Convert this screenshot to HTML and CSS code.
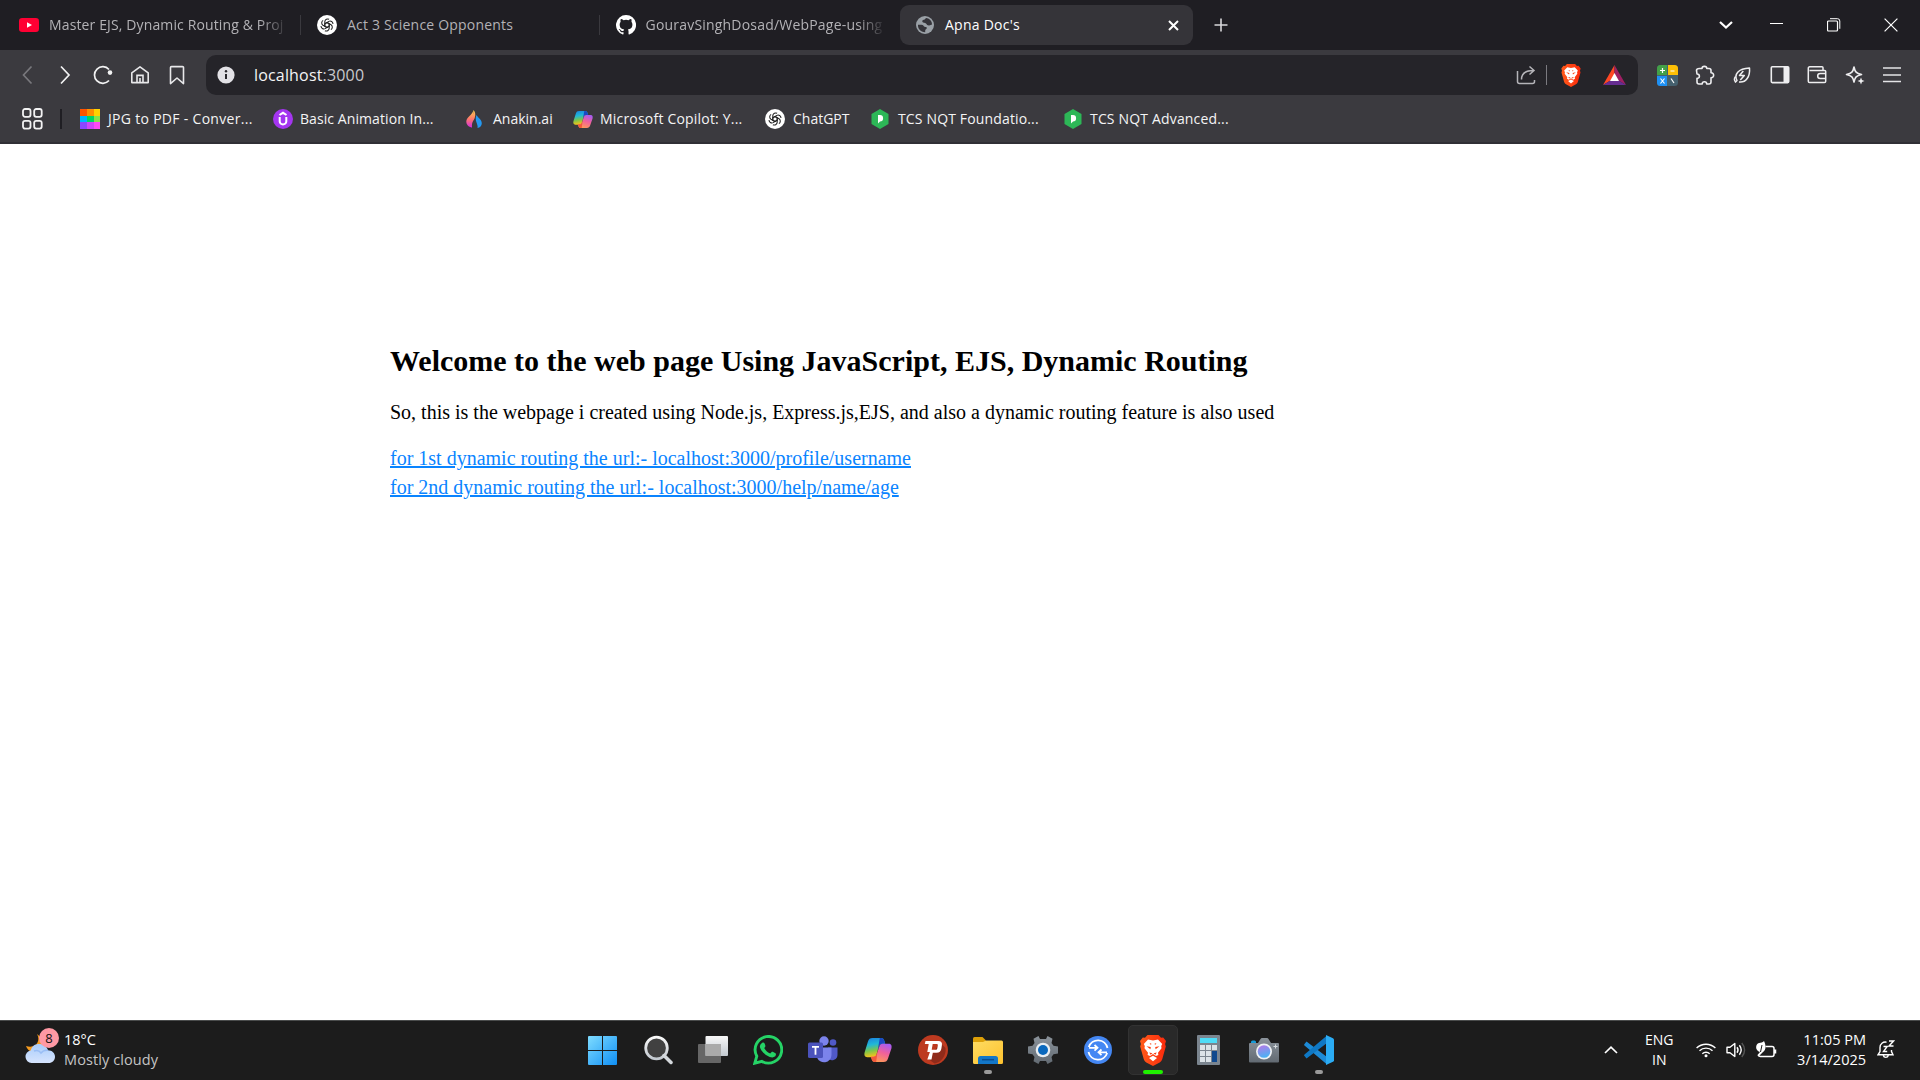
FILE: index.html
```html
<!DOCTYPE html>
<html lang="en">
<head>
<meta charset="utf-8">
<title>Apna Doc's</title>
<link rel="stylesheet" href="styles.css">
</head>
<body>
<svg class="defs" width="0" height="0" aria-hidden="true">
  <defs>
    <linearGradient id="cpA" x1="0" y1="0" x2="0.2" y2="1"><stop offset="0" stop-color="#1b7fe0"/><stop offset=".4" stop-color="#20b8d8"/><stop offset=".7" stop-color="#7cc64a"/><stop offset="1" stop-color="#f3c21a"/></linearGradient>
    <linearGradient id="cpB" x1="0.7" y1="0" x2="0.3" y2="1"><stop offset="0" stop-color="#a85cf0"/><stop offset=".45" stop-color="#f0609c"/><stop offset="1" stop-color="#ff9b55"/></linearGradient>
    <linearGradient id="win" x1="0" y1="0" x2="1" y2="1"><stop offset="0" stop-color="#7fdcff"/><stop offset="1" stop-color="#0f8ff5"/></linearGradient>
    <linearGradient id="glass" x1="0" y1="0" x2="0" y2="1"><stop offset="0" stop-color="#f8f8f8"/><stop offset="1" stop-color="#c3c9d0"/></linearGradient>
    <linearGradient id="flameA" x1="0" y1="0" x2="0" y2="1"><stop offset="0" stop-color="#ffd34d"/><stop offset=".5" stop-color="#ff7a6a"/><stop offset="1" stop-color="#d52be0"/></linearGradient>
    <linearGradient id="cloud" x1="0" y1="0" x2="0" y2="1"><stop offset="0" stop-color="#a9cdfb"/><stop offset="1" stop-color="#d6e4fd"/></linearGradient>
    <linearGradient id="folder" x1="0" y1="0" x2="1" y2="1"><stop offset="0" stop-color="#ffdc62"/><stop offset="1" stop-color="#fdc22e"/></linearGradient>
    <linearGradient id="lion" x1="0" y1="0" x2="1" y2="0"><stop offset="0" stop-color="#ff5a1a"/><stop offset="1" stop-color="#fb2a0c"/></linearGradient>
    <linearGradient id="lens" x1=".3" y1="0" x2=".6" y2="1"><stop offset="0" stop-color="#b27be8"/><stop offset="1" stop-color="#46b4f4"/></linearGradient>
    <linearGradient id="steel" x1="0" y1="0" x2="0" y2="1"><stop offset="0" stop-color="#8b939b"/><stop offset="1" stop-color="#626a72"/></linearGradient>
    <symbol id="openai" viewBox="0 0 20 20">
      <circle cx="10" cy="10" r="10" fill="#fff"/>
      <g fill="none" stroke="#222" stroke-width="1.05" stroke-linejoin="round">
        <path id="petal" d="M10 7.5 L12.2 8.8 V13.4 A2.9 2.9 0 0 1 7.9 15.7"/>
        <use href="#petal" transform="rotate(60 10 10)"/><use href="#petal" transform="rotate(120 10 10)"/>
        <use href="#petal" transform="rotate(180 10 10)"/><use href="#petal" transform="rotate(240 10 10)"/>
        <use href="#petal" transform="rotate(300 10 10)"/>
      </g>
    </symbol>
    <symbol id="copilot" viewBox="0 0 28 26">
      <path d="M8.5 1H17c2 0 2.8 1.2 3.4 3l.8 2.8h-2.5c-2.2 0-3.2 1-3.9 3.2l-2.2 7.2c-.8 2.3-1.6 3-3.6 3H3.2C.6 20.200 0 18 .6 15.500L3.900 4.800C4.800 2 6 1 8.500 1z" fill="url(#cpA)"/>
      <path d="M15.800 1H17c2 0 2.800 1.200 3.400 3l.8 2.800h-2.500c-2.200 0-3.200 1-3.900 3.200l-1.300 4z" fill="#1a49c4"/>
      <path d="M19.500 25H11c-2 0-2.800-1.200-3.400-3L7 19.800h2c2.200 0 3.200-1 3.900-3.200l2.200-6.600c.8-2.300 1.600-3.200 3.600-3.200h6.100c2.600 0 3.200 2.200 2.600 4.700l-3.300 9.700C23.200 24 22 25 19.500 25z" fill="url(#cpB)"/>
      <path d="M12.200 25H11c-2 0-2.800-1.200-3.400-3L7 19.800h2c2.200 0 3.200-1 3.900-3.200l.6-1.800z" fill="#f2593c"/>
    </symbol>
    <symbol id="brave" viewBox="0 0 26 31">
      <path d="M7.500 0h11l2.500 2.800 2.200-.4L26 6l-.9 3 .7 2.500-3.500 12.500c-.5 1.600-1.300 2.500-2.600 3.400L13 31l-6.700-3.600C5 26.500 4.200 25.600 3.700 24L.2 11.500.9 9 0 6l2.800-3.600 2.200.4z" fill="url(#lion)"/>
      <path d="M8 4.500l5 1 5-1 4.200 4.400-1 2.100.3 2.200-3.500 4.600.4 2.200-2.400 1.100-3-2-3 2-2.400-1.100.4-2.200-3.500-4.600.3-2.200-1-2.100z" fill="#fff"/>
      <path d="M6.500 11.200l4.300.9-.4 2.200zM19.500 11.200l-4.300.9.4 2.200z" fill="#fb3d10"/>
      <path d="M9.500 8l2 .8-.6 1.200zM16.500 8l-2 .8.600 1.200zM9.300 17.500l3.200.7-2 1.500zM16.700 17.500l-3.200.7 2 1.500z" fill="#fb3d10"/>
      <path d="M13 20.800l4 2.200-4 3.200L9 23z" fill="#fff"/>
    </symbol>
    <symbol id="hexp" viewBox="0 0 18 20">
      <path d="M9 0l8.500 5v10L9 20 .5 15V5z" fill="#2db757"/>
      <path d="M7 6h2a3.100 3.300 0 0 1 0 6.600L7 14.500z" fill="#fff"/>
    </symbol>
  </defs>
</svg>

<header class="browser">
  <div class="tabstrip">
    <div class="tab tab-first">
      <svg class="favicon" width="20" height="14" viewBox="0 0 20 14"><rect width="20" height="14" rx="3.200" fill="#ff0033"/><path d="M8 4.200v5.600L13 7z" fill="#fff"/></svg>
      <span class="tab-title fade">Master EJS, Dynamic Routing &amp; Proj</span>
    </div>
    <div class="tab">
      <svg class="favicon" width="20" height="20"><use href="#openai"/></svg>
      <span class="tab-title">Act 3 Science Opponents</span>
    </div>
    <div class="tab">
      <svg class="favicon" width="20" height="20" viewBox="0 0 16 16"><path fill="#fff" d="M8 0a8 8 0 0 0-2.530 15.590c.4.070.55-.17.55-.38v-1.490c-2.010.37-2.530-.49-2.690-.94-.09-.23-.48-.94-.82-1.130-.28-.15-.68-.52-.01-.53.63-.01 1.080.58 1.230.82.72 1.210 1.870.87 2.330.66.07-.52.28-.87.51-1.070-1.780-.2-3.640-.89-3.640-3.950 0-.87.310-1.590.82-2.150-.08-.2-.36-1.020.08-2.120 0 0 .67-.21 2.200.82a7.400 7.400 0 0 1 4 0c1.530-1.040 2.200-.82 2.200-.82.44 1.100.16 1.920.08 2.120.51.56.82 1.270.82 2.150 0 3.070-1.870 3.750-3.650 3.950.29.25.54.730.54 1.480v2.200c0 .21.150.46.550.38A8 8 0 0 0 8 0z"/></svg>
      <span class="tab-title fade">GouravSinghDosad/WebPage-using</span>
    </div>
    <div class="tab tab-active">
      <svg class="favicon" width="18" height="18" viewBox="0 0 18 18"><circle cx="9" cy="9" r="9" fill="#9aa0a6"/><path d="M2 8.800h3.500c1.800 0 2 1.600 3 2s2.300 0 2.300 1.300-1.600 1.200-1.600 2.600v1.500C4.500 16.300 1.600 12.500 2 8.800zM10.500 2c-1.400.3-1.200 1.500-2.600 1.700S6 4.800 6.500 6s2.500.4 3.500 1.400 1.200 2 3 2 1.600-1 3.100-1A7.100 7.100 0 0 0 10.500 2z" fill="#35343a"/></svg>
      <span class="tab-title">Apna Doc's</span>
      <svg class="tab-close" width="11" height="11" viewBox="0 0 11 11"><path d="M1 1l9 9M10 1l-9 9" stroke="#fff" stroke-width="2"/></svg>
    </div>
    <svg class="new-tab" width="14" height="14" viewBox="0 0 14 14"><path d="M7 .5v13M.5 7h13" stroke="#d8d8da" stroke-width="1.600"/></svg>
    <div class="window-controls">
      <svg width="14" height="8" viewBox="0 0 14 8"><path d="M1 1l6 5.500L13 1" fill="none" stroke="#fff" stroke-width="2.200"/></svg>
      <svg width="14" height="14" viewBox="0 0 14 14"><path d="M0 5.500h13" stroke="#fff"/></svg>
      <svg width="14" height="14" viewBox="0 0 14 14" fill="none" stroke="#fff"><rect x=".5" y="3" width="10" height="10" rx="1" stroke-width="1.200"/><path d="M3 .7h7.500a2.300 2.300 0 0 1 2.300 2.300v7.800"/></svg>
      <svg width="14" height="14" viewBox="0 0 14 14"><path d="M.6.6l12.800 12.800M13.400.6L.6 13.400" stroke="#fff" stroke-width="1.200"/></svg>
    </div>
  </div>

  <div class="toolbar">
    <nav class="nav-icons">
      <svg width="20" height="20" viewBox="0 0 20 20"><path d="M13.500 1.500L5.500 10l8 8.500" fill="none" stroke="#79787d" stroke-width="1.700"/></svg>
      <svg width="20" height="20" viewBox="0 0 20 20"><path d="M6 1.500l8 8.500-8 8.500" fill="none" stroke="#f2f2f3" stroke-width="1.700"/></svg>
      <svg width="20" height="20" viewBox="0 0 20 20"><path d="M16 4.500A8.300 8.300 0 1 0 16 15.500" fill="none" stroke="#f2f2f3" stroke-width="1.700"/><circle cx="17" cy="7.600" r="2.300" fill="#f2f2f3"/></svg>
      <svg width="20" height="20" viewBox="0 0 20 20" fill="none" stroke="#e8e8ea" stroke-width="1.600"><path d="M1.800 17.600V7.800L10 1.800l8.200 6v9.800z" stroke-linejoin="round"/><path d="M7 17.600v-7.200h6v7.200M10 13v4.600"/></svg>
      <svg width="20" height="20" viewBox="0 0 20 20"><path d="M4.500 1.600h11a1 1 0 0 1 1 1v16L10 13l-6.500 5.600v-16a1 1 0 0 1 1-1z" fill="none" stroke="#e8e8ea" stroke-width="1.600" stroke-linejoin="round"/></svg>
    </nav>
    <div class="address">
      <svg width="18" height="18" viewBox="0 0 18 18"><circle cx="9" cy="9" r="8.600" fill="#e3e2e6"/><path d="M9 8v5" stroke="#29282d" stroke-width="2"/><circle cx="9" cy="5.300" r="1.200" fill="#29282d"/></svg>
      <span class="url">localhost<span class="port">:3000</span></span>
      <div class="address-actions">
        <svg width="20" height="20" viewBox="0 0 20 20" fill="none" stroke="#b5b4b9" stroke-width="1.500"><path d="M1.500 6v10.500a2 2 0 0 0 2 2h13a2 2 0 0 0 2-2V15"/><path d="M5.500 14.500c0-6 4-9 12-9M13.500 1.500l4.500 4-4.500 4"/></svg>
        <span class="address-rule"></span>
        <svg class="shield" width="20" height="23"><use href="#brave"/></svg>
        <svg width="23" height="20" viewBox="0 0 23 20"><path d="M11.500 0L0 20l11.500-7z" fill="#ff4724"/><path d="M11.500 0L23 20l-11.500-7z" fill="#9e1f63"/><path d="M0 20h23l-11.500-7z" fill="#662d91"/><path d="M11.500 8L7 16h9z" fill="#fff"/></svg>
      </div>
    </div>
    <div class="extensions">
      <svg width="21" height="21" viewBox="0 0 21 21"><rect width="21" height="21" rx="3.500" fill="#45606e"/><path d="M3.500 0H10v10H0V3.500A3.500 3.500 0 0 1 3.500 0z" fill="#43a047"/><path d="M11 0h6.500A3.500 3.500 0 0 1 21 3.500V10H11z" fill="#fdbf05"/><path d="M0 11h10v10H3.500A3.500 3.500 0 0 1 0 17.500z" fill="#1e90f4"/><path d="M3 5.500h5M5.500 3v5M13.500 6h4M3.500 13.500l4 5M7.500 13.500l-4 5M14 13.500l3 4.500" stroke="#fff" stroke-width="1.200"/></svg>
      <svg width="21" height="21" viewBox="0 0 21 21"><path d="M4.500 3.500H7C7 .6 11.800.6 11.800 3.500H14q2 0 2 2v2.200c3.500-.2 3.500 5.300 0 5.100V17q0 2-2 2h-2.300c0-3-4.500-3-4.500 0H4q-2 0-2-2v-3.700c3.200.4 3.200-4.500 0-4.300L1.500 5.500q0-2 3-2z" fill="none" stroke="#eeeef0" stroke-width="1.600" stroke-linejoin="round"/></svg>
      <svg class="leaf" width="21" height="21" viewBox="0 0 21 21" fill="none" stroke="#eeeef0" stroke-width="1.500" stroke-linejoin="round"><path d="M4 17.500l2-2C2.800 9.500 7 3.500 18.500 3 19.300 11.500 15 18 8 17"/><path d="M4.600 11.500c-1.600 2-1.400 4 .2 5.500"/><path d="M12.300 6l-3.800 4.500h4.800L9.300 15"/></svg>
      <svg width="20" height="20" viewBox="0 0 20 20"><rect x="1.300" y="1.800" width="17.400" height="15.800" rx="1" fill="none" stroke="#eeeef0" stroke-width="1.600"/><path d="M13.500 2h5v15.500h-5z" fill="#eeeef0"/></svg>
      <svg width="20" height="20" viewBox="0 0 20 20" fill="none" stroke="#eeeef0" stroke-width="1.500"><path d="M16 5.500V2.800a1 1 0 0 0-1-1H2.800A1.500 1.500 0 0 0 1.300 3.500v12.800a1.300 1.300 0 0 0 1.300 1.300h14.800a1.300 1.300 0 0 0 1.300-1.300V6.500a1 1 0 0 0-1-1H2.500"/><path d="M18.700 8.500h-5.500a2.500 2.500 0 0 0 0 5h5.500"/></svg>
      <svg width="21" height="21" viewBox="0 0 21 21"><path d="M10 2c1 5 2.200 6.200 7.500 7.500-5.300 1.300-6.500 2.500-7.500 7.500C9 12 7.800 10.800 2.500 9.500 7.800 8.200 9 7 10 2z" fill="none" stroke="#eeeef0" stroke-width="1.600" stroke-linejoin="round"/><path d="M17 12.500l1 2.500 2.500 1-2.500 1-1 2.500-1-2.500-2.500-1 2.500-1z" fill="#eeeef0"/></svg>
      <svg width="20" height="20" viewBox="0 0 20 20"><path d="M1 3h18M1 10h18M1 16.500h18" stroke="#e4e4e6" stroke-width="1.600"/></svg>
    </div>
  </div>

  <div class="bookmarks">
    <svg class="apps" width="21" height="22" viewBox="0 0 21 22" fill="none" stroke="#f2f2f3" stroke-width="1.800"><rect x="1" y="1" width="7.500" height="7.800" rx="2"/><rect x="12.200" y="1" width="7.500" height="7.800" rx="2"/><rect x="1" y="12.800" width="7.500" height="7.800" rx="2"/><rect x="12.200" y="12.800" width="7.500" height="7.800" rx="2"/></svg>
    <span class="bookmark-rule"></span>
    <a class="bookmark w1"><svg width="20" height="20" viewBox="0 0 20 20"><path d="M0 0h7v7H0z" fill="#ff5400"/><path d="M7 0h7v7H7z" fill="#ff8f00"/><path d="M14 0h6v7h-6z" fill="#ffd200"/><path d="M0 7h7v6H0z" fill="#00b3ff"/><path d="M7 7h7v6H7z" fill="#00d563"/><path d="M14 7h6v6h-6z" fill="#87e34b"/><path d="M0 13h7v7H0z" fill="#8c46ff"/><path d="M7 13h7v7H7z" fill="#cf45fa"/><path d="M14 13h6v7h-6z" fill="#ff48f5"/></svg><span>JPG to PDF - Conver...</span></a>
    <a class="bookmark w2"><svg width="20" height="20" viewBox="0 0 20 20"><circle cx="10" cy="10" r="10" fill="#a435f0"/><path d="M6.700 8v4.500a3.300 3 0 0 0 6.600 0V8M6.500 6L10 3.800 13.500 6" fill="none" stroke="#fff" stroke-width="2"/></svg><span>Basic Animation In...</span></a>
    <a class="bookmark w3"><svg width="16" height="20" viewBox="0 0 16 20"><path d="M7.500 1c1 4-1 6-2.500 9-1.300 3-.7 6 1 8.500C2.500 18 .3 15.500.3 12.500.3 8 6.500 6 7.500 1z" fill="url(#flameA)"/><path d="M10.500 6c1.500 3 5.300 4.500 5.300 8.200 0 2.500-1.800 4.300-4.300 4.800 1-4-3.500-7-1-13z" fill="#2499f2"/><path d="M7.500 1c2 2 2.300 5 1.200 8s-3.200 4-2.700 9.500c-2.500-1.500-3.500-5-1.800-8.500S8.500 5 7.500 1z" fill="url(#flameA)"/></svg><span>Anakin.ai</span></a>
    <a class="bookmark w4"><svg width="20" height="19"><use href="#copilot"/></svg><span>Microsoft Copilot: Y...</span></a>
    <a class="bookmark w5"><svg width="20" height="20"><use href="#openai"/></svg><span>ChatGPT</span></a>
    <a class="bookmark w6"><svg width="18" height="20"><use href="#hexp"/></svg><span>TCS NQT Foundatio...</span></a>
    <a class="bookmark w7"><svg width="18" height="20"><use href="#hexp"/></svg><span>TCS NQT Advanced...</span></a>
  </div>
</header>

<main class="page">
  <h1>Welcome to the web page Using JavaScript, EJS, Dynamic Routing</h1>
  <p>So, this is the webpage i created using Node.js, Express.js,EJS, and also a dynamic routing feature is also used</p>
  <div class="links">
    <a href="#">for 1st dynamic routing the url:- localhost:3000/profile/username</a>
    <a href="#">for 2nd dynamic routing the url:- localhost:3000/help/name/age</a>
  </div>
</main>

<footer class="taskbar">
  <div class="weather">
    <div class="weather-icon">
      <svg width="30" height="30" viewBox="0 0 30 30"><path d="M12 0c4 7-1 15-11 12 1 3 3 5 6 6l10-3 2-9z" fill="#f49b20"/><path d="M6.500 29a6.300 6.300 0 0 1-.8-12.500C7 12 10 10 14 10c4.500 0 8 2.700 9 6.300 4 .1 7 2.800 7 6.400 0 3.500-2.700 6.300-6.500 6.300z" fill="url(#cloud)"/><path d="M9 17c4-1.500 6 .5 7 2 2-2.500 4.500-3 7-2.700" fill="none" stroke="#82aef0" stroke-width="1.500" opacity=".6"/></svg>
      <span class="badge">8</span>
    </div>
    <div class="weather-text"><span>18°C</span><span class="cond">Mostly cloudy</span></div>
  </div>

  <div class="apps-row">
    <div class="app"><svg width="29" height="29" viewBox="0 0 29 29"><path d="M1 0h13v14H0V1q0-1 1-1zM15 0h13q1 0 1 1v13H15zM0 15h14v14H1q-1 0-1-1zM15 15h14v13q0 1-1 1H15z" fill="url(#win)"/></svg></div>
    <div class="app"><svg width="30" height="30" viewBox="0 0 30 30"><circle cx="13.500" cy="13" r="10.800" fill="#414141" stroke="url(#glass)" stroke-width="2.800"/><path d="M21 20.500l7 7" stroke="#d4d8dc" stroke-width="3.500" stroke-linecap="round"/></svg></div>
    <div class="app"><svg width="30" height="30" viewBox="0 0 30 30"><rect x="0" y="9" width="23" height="19" rx="1" fill="#666"/><rect x="7.500" y="1" width="22.500" height="20" rx="1" fill="url(#glass)"/><path d="M7.500 9H23v12H7.500z" fill="#aaa"/></svg></div>
    <div class="app"><svg width="30" height="30" viewBox="0 0 30 30"><path d="M1.800 28.200l2-7A13.300 13.300 0 1 1 9 26.400z" fill="none" stroke="#25d366" stroke-width="2.900"/><path d="M9 8c1.800-1.200 2.500 0 3 1.500.6 1.400.6 2-.8 3.500 1.500 2.800 3 4.300 6 5.500 1.300-1.700 2-2 3-1.500l2.300 1.200c1 .6.200 2.600-.6 3.400-4 3.200-14-4-15-9.500-.2-1.500.8-3.300 2.100-4.100z" fill="#25d366"/></svg></div>
    <div class="app"><svg width="30" height="30" viewBox="0 0 30 30"><circle cx="25" cy="7.500" r="3.300" fill="#5059c9"/><path d="M20 12.500h9.500v7a5.500 5.500 0 0 1-9.500 4z" fill="#5059c9"/><circle cx="16" cy="6" r="4.700" fill="#7b83eb"/><path d="M9 12.500h14.500V20a7.500 7.500 0 0 1-14.500 2.500z" fill="#7b83eb"/><rect y="7.500" width="15" height="15.500" rx="1.500" fill="#4b53bc"/><path d="M4 11.800h7M7.500 11.800v8" stroke="#fff" stroke-width="1.800"/></svg></div>
    <div class="app"><svg width="28" height="26"><use href="#copilot"/></svg></div>
    <div class="app"><svg width="30" height="30" viewBox="0 0 30 30"><circle cx="15" cy="15" r="15" fill="#bd3a20"/><path d="M11 24.500l11-17 5.500 5.500a14 14 0 0 1-11 15.500z" fill="#8f2b1a"/><path d="M9.300 24.500h4.200l1.300-6.800h3.700c3 0 4.300-1.300 4.800-3.700l.6-3.700c.5-2.700-.6-4.300-3.500-4.300H7.500L6.800 9h3.900l-1.400 8h4l1.400-8h3.800c1.100 0 1.500.5 1.300 1.500l-.5 2.800c-.2 1-.7 1.500-1.800 1.500h-4.800z" fill="#fff"/></svg></div>
    <div class="app running"><svg width="30" height="28" viewBox="0 0 30 28"><path d="M1.500 1h8L13 4.500V8H0V2.500Q0 1 1.500 1z" fill="#dda008"/><path d="M0 6h10l3-1.500h15.500Q30 4.500 30 6v20.500Q30 28 28.500 28h-27Q0 28 0 26.500z" fill="url(#folder)"/><path d="M5 28v-5.500Q5 20 7.500 20h15q2.500 0 2.500 2.500V28z" fill="#1377c8"/><path d="M9 23.700h12" stroke="#0a4d91" stroke-width="1.500"/></svg></div>
    <div class="app"><svg width="30" height="30" viewBox="0 0 30 30"><path d="M10.500 1l1.500 3h6l1.500-3 5 2.800L23.500 8l2 2.800 4.500.7v7l-4.500.7-2 2.800 1 4.200-5 2.800-1.500-3h-6l-1.500 3-5-2.800 1-4.200-2-2.800L0 18.500v-7l4.500-.7 2-2.800-1-4.200z" fill="url(#steel)"/><circle cx="15" cy="15" r="7.300" fill="#e9eef2"/><circle cx="15" cy="15" r="5" fill="#0968bd"/></svg></div>
    <div class="app"><svg width="28" height="28" viewBox="0 0 28 28"><circle cx="14" cy="14" r="14" fill="#4487f3"/><path d="M4.800 11A9.700 9.700 0 0 1 23.500 12M23.200 17A9.700 9.700 0 0 1 4.500 16M5 11.800h7.500M10.500 9l3 2.800-3 2.800M23 16.300h-7.500M17.500 13.500l-3 2.800 3 2.800" fill="none" stroke="#fff" stroke-width="1.800"/></svg></div>
    <div class="app focused"><svg width="26" height="31"><use href="#brave"/></svg></div>
    <div class="app"><svg width="23" height="30" viewBox="0 0 23 30"><rect width="23" height="30" rx="1" fill="#7b858f"/><path d="M3 3h17v5H3z" fill="#4edcf7"/><path d="M3 10h5v5H3zM9 10h5v5H9zM15 10h5v5h-5zM3 16h5v5H3zM9 16h5v5H9zM3 22h5v5H3zM9 22h5v5H9z" fill="#dce3e8"/><path d="M15 16h5v11h-5z" fill="#10498e"/></svg></div>
    <div class="app"><svg width="30" height="25" viewBox="0 0 30 25"><rect x="2" y="2.500" width="5" height="5" rx="1.500" fill="#159bd8"/><path d="M1 5h8l2.500-4q.6-1 1.500-1h5q1 0 1.500 1L22 5h7q1 0 1 1v17.500q0 1-1 1H1q-1 0-1-1V6q0-1 1-1z" fill="url(#steel)"/><circle cx="15" cy="13.500" r="8" fill="#eef1f4"/><circle cx="15" cy="13.500" r="6.300" fill="url(#lens)"/><path d="M26.500 6.500v4M24.500 8.500h4" stroke="#d7dce0"/></svg></div>
    <div class="app running"><svg width="30" height="30" viewBox="0 0 30 30"><path d="M2.500 6.500L23 22v7.500L.5 10.500q-.8-.8 0-1.600z" fill="#1d8ad6"/><path d="M2.500 23.500L23 8V.5L.5 19.500q-.8.800 0 1.600z" fill="#0f78c4"/><path d="M22 0l7 3.200q1 .5 1 1.500v20.600q0 1-1 1.500L22 30z" fill="#2bacf4"/></svg></div>
  </div>

  <div class="tray">
    <svg class="tray-up" width="14" height="8" viewBox="0 0 14 8"><path d="M1 7l6-5.800L13 7" fill="none" stroke="#fff" stroke-width="1.700"/></svg>
    <div class="lang"><span>ENG</span><span>IN</span></div>
    <div class="status">
      <svg width="20" height="16" viewBox="0 0 20 16" fill="none" stroke="#fff" stroke-width="1.400"><path d="M.6 6a13.500 13.500 0 0 1 18.800 0M3.500 8.800a9.300 9.300 0 0 1 13 0M6.300 11.700a5.300 5.300 0 0 1 7.400 0"/><circle cx="10" cy="13.800" r="1.500" fill="#fff" stroke="none"/></svg>
      <svg width="20" height="18" viewBox="0 0 20 18" fill="none" stroke="#fff" stroke-width="1.400"><path d="M1 6.300h3L8.800 2.500v13L4 11.700H1z" stroke-linejoin="round"/><path d="M11 6.300c1.300 1.700 1.300 3.700 0 5.400M13.400 4.300c2.300 3 2.300 6.400 0 9.400"/><path d="M15.800 2c3.600 4.500 3.600 9.500 0 14" stroke="#555"/></svg>
      <svg width="21" height="18" viewBox="0 0 21 18"><path d="M9.500 5.500H16a2 2 0 0 1 2 2v6a2 2 0 0 1-2 2H4.500a3 3 0 0 1-2.500-1.300M19.500 8.500v4" fill="none" stroke="#fff" stroke-width="1.500"/><path d="M8 0c2 4 2.500 9-1.500 11.500L3 15l-1.500-1L4 11C-1.500 9-.5 3 3 2c2-.5 3.500 0 5-2z" fill="#fff"/><path d="M6 4L4.500 11" stroke="#1c1c1c"/></svg>
    </div>
    <div class="clock"><span>11:05 PM</span><span>3/14/2025</span></div>
    <svg class="bell" width="18" height="19" viewBox="0 0 18 19" fill="none" stroke="#fff" stroke-width="1.400"><path d="M9.500 2.200C6 1.500 3 4 3 7.500v4L1 14.800h15l-1.500-3.300V10M6.300 15.500a2.600 2.600 0 0 0 5 0"/><path d="M12 1h4.500l-4.500 5h4.500M6.500 6.500h3.700l-3.700 5h3.700"/></svg>
  </div>
</footer>
</body>
</html>
```
FILE: styles.css
```css
* { box-sizing: border-box; }
body {
  margin: 0;
  width: 1920px;
  height: 1080px;
  overflow: hidden;
  display: flex;
  flex-direction: column;
  background: #fff;
  font-family: "Open Sans", "Noto Sans", sans-serif;
}
svg { display: block; flex: none; }
.defs { position: absolute; }
span { white-space: nowrap; }

/* Browser chrome */
.browser {
  height: 144px;
  flex: none;
  background: #3b3a3f;
  border-bottom: 2px solid #302f35;
  color: #f4f4f5;
}
.tabstrip {
  height: 50px;
  background: #1f1e23;
  display: flex;
  align-items: center;
}
.tab {
  width: 298.500px;
  height: 20px;
  padding-left: 16px;
  display: flex;
  align-items: center;
  gap: 10px;
  border-right: 1px solid #3a393e;
  color: #b3b2b6;
  font-size: 14px;
  letter-spacing: 0.2px;
}
.tab-first { width: 301px; padding-left: 19px; letter-spacing: 0.13px; }
.tab:nth-child(3) { border-right: 0; letter-spacing: 0.2px; }
.tab-title { flex: 1; line-height: 22px; }
.tab .fade {
  flex: none;
  width: 240px;
  -webkit-mask-image: linear-gradient(to right, #000 88%, transparent);
  mask-image: linear-gradient(to right, #000 88%, transparent);
}
.tab-active {
  width: 293px;
  height: 40px;
  margin-left: 2px;
  padding: 0 14px 0 16px;
  gap: 11px;
  border: 0;
  border-radius: 9px;
  background: #353439;
  color: #fff;
  letter-spacing: 0.25px;
}
.new-tab { margin-left: 21px; }
.window-controls {
  margin-left: auto;
  margin-right: 22px;
  display: flex;
  align-items: center;
  gap: 43px;
}
.window-controls svg:first-child { margin-right: -6px; }

.toolbar {
  height: 50px;
  padding: 0 18px;
  display: flex;
  align-items: center;
}
.nav-icons { display: flex; gap: 17.300px; width: 188px; }
.address {
  width: 1432px;
  height: 40px;
  padding: 0 12px 0 11px;
  border-radius: 10px;
  background: #252429;
  display: flex;
  align-items: center;
}
.url { margin-left: 19px; font-size: 16px; line-height: 22px; letter-spacing: 0.17px; }
.port { color: #c9c8cd; }
.address-actions { margin-left: auto; display: flex; align-items: center; }
.address-rule { width: 1px; height: 20px; margin: 0 14px 0 10px; background: #7b7a80; }
.shield { margin-right: 22px; }
.extensions { flex: 1; margin-left: 19px; display: flex; align-items: center; justify-content: space-between; }
.leaf { margin: 0 2px 0 -2px; }

.bookmarks {
  height: 38px;
  padding-left: 22px;
  display: flex;
  align-items: center;
  font-size: 14px;
}
.bookmark-rule { width: 2px; height: 20px; margin: 0 18px 0 17px; background: #1f1e23; }
.bookmark { display: flex; align-items: center; gap: 7px; line-height: 20px; }
.w1 { width: 193px; gap: 8px; letter-spacing: 0.3px; }
.w2 { width: 193px; letter-spacing: 0.08px; }
.w3 { width: 107px; gap: 11px; }
.w4 { width: 192px; letter-spacing: 0.2px; }
.w5 { width: 106px; gap: 8px; }
.w6 { width: 193px; gap: 9px; letter-spacing: 0.15px; }
.w7 { gap: 8px; letter-spacing: 0.17px; }

/* Page content */
.page {
  flex: 1;
  padding: 0 390px;
  font-family: "Liberation Serif", "Times New Roman", serif;
  font-size: 20px;
  color: #000;
}
.page h1 { margin: 200px 0 0; font-size: 30px; line-height: 34px; }
.page p { margin: 23px 0 0; line-height: 23px; }
.links { margin-top: 20px; display: flex; flex-direction: column; align-items: flex-start; }
.links a { color: #0a84ff; line-height: 29px; }

/* Taskbar */
.taskbar {
  height: 60px;
  flex: none;
  background: #1c1c1c;
  border-top: 1px solid #4a4c4c;
  color: #fff;
  font-size: 14.500px;
  display: flex;
  align-items: flex-start;
}
.weather { width: 577.500px; height: 59px; padding: 13px 0 0 25px; display: flex; gap: 9px; }
.weather-icon { position: relative; height: 30px; }
.badge {
  position: absolute;
  left: 14px;
  top: -6px;
  width: 20px;
  height: 20px;
  border-radius: 50%;
  background: #ff99a4;
  color: #111;
  font-size: 13px;
  line-height: 20px;
  text-align: center;
}
.weather-text, .lang, .clock { display: flex; flex-direction: column; line-height: 20px; }
.weather-text { margin-top: -4px; }
.cond { color: #c4c4c4; letter-spacing: 0.1px; }
.apps-row { display: flex; gap: 5.100px; padding-top: 4px; }
.app {
  position: relative;
  width: 50px;
  height: 50px;
  display: flex;
  align-items: center;
  justify-content: center;
  border-radius: 5px;
}
.running::after, .focused::after {
  content: "";
  position: absolute;
  left: 21px;
  bottom: 1px;
  width: 8px;
  height: 4px;
  border-radius: 2px;
  background: #9a9a9a;
}
.focused { background: #292929; border: 1px solid #323232; }
.focused::after { left: 14px; bottom: 0; width: 20px; background: #1ff000; }
.tray { flex: 1; height: 57px; display: flex; align-items: center; }
.tray-up { margin-left: 260.500px; }
.lang { width: 40px; margin-left: 21px; align-items: center; font-size: 14px; }
.status { display: flex; align-items: center; gap: 10px; margin-left: 17px; }
.clock { width: 89px; align-items: flex-end; letter-spacing: 0.05px; }
.bell { margin-left: 11px; }
```
